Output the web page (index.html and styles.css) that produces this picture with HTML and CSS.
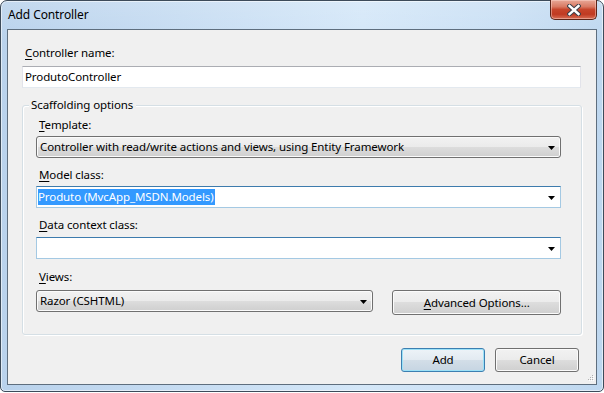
FILE: index.html
```html
<!DOCTYPE html>
<html>
<head>
<meta charset="utf-8">
<link rel="stylesheet" href="styles.css">
</head>
<body>
<div class="window">
  <div class="titlebar">
    <span class="title">Add Controller</span>
    <button class="close" aria-label="Close">
      <svg width="14" height="12" viewBox="0 0 14 12"><path d="M2.5 2 L11.5 10 M11.5 2 L2.5 10" stroke="#3b3f48" stroke-width="4.4" stroke-linecap="square"/><path d="M2.5 2 L11.5 10 M11.5 2 L2.5 10" stroke="#ffffff" stroke-width="2.4" stroke-linecap="square"/></svg>
    </button>
  </div>
  <div class="client">
    <div class="label first"><u>C</u>ontroller name:</div>
    <div class="textbox">ProdutoController</div>
    <div class="group">
      <div class="group-title">Scaffolding options</div>
      <div class="label"><u>T</u>emplate:</div>
      <div class="combo button-combo"><span class="combo-text">Controller with read/write actions and views, using Entity Framework</span><svg class="arrow" width="7" height="4" viewBox="0 0 7 4"><polygon points="0,0 7,0 3.5,4" fill="#000"/></svg></div>
      <div class="label gap"><u>M</u>odel class:</div>
      <div class="combo edit-combo"><span class="combo-text"><span class="selected">Produto (MvcApp_MSDN.Models)</span></span><svg class="arrow" width="7" height="4" viewBox="0 0 7 4"><polygon points="0,0 7,0 3.5,4" fill="#000"/></svg></div>
      <div class="label gap"><u>D</u>ata context class:</div>
      <div class="combo edit-combo data"><span class="combo-text"></span><svg class="arrow" width="7" height="4" viewBox="0 0 7 4"><polygon points="0,0 7,0 3.5,4" fill="#000"/></svg></div>
      <div class="label gap views-label"><u>V</u>iews:</div>
      <div class="views-row">
        <div class="combo button-combo views"><span class="combo-text">Razor (CSHTML)</span><svg class="arrow" width="7" height="4" viewBox="0 0 7 4"><polygon points="0,0 7,0 3.5,4" fill="#000"/></svg></div>
        <button class="btn advanced"><u>A</u>dvanced Options...</button>
      </div>
    </div>
    <div class="actions">
      <button class="btn default">Add</button>
      <button class="btn">Cancel</button>
    </div>
    <svg class="grip" width="7" height="7" viewBox="0 0 7 7">
      <rect x="5" y="0" width="1" height="1" fill="#b0b0b0"/>
      <rect x="3" y="2" width="1" height="1" fill="#b0b0b0"/>
      <rect x="5" y="2" width="1" height="1" fill="#b0b0b0"/>
      <rect x="1" y="4" width="1" height="1" fill="#b0b0b0"/>
      <rect x="3" y="4" width="1" height="1" fill="#b0b0b0"/>
      <rect x="5" y="4" width="1" height="1" fill="#b0b0b0"/>
      <rect x="6" y="1" width="1" height="1" fill="#fff"/>
      <rect x="4" y="3" width="1" height="1" fill="#fff"/>
      <rect x="6" y="3" width="1" height="1" fill="#fff"/>
      <rect x="2" y="5" width="1" height="1" fill="#fff"/>
      <rect x="4" y="5" width="1" height="1" fill="#fff"/>
      <rect x="6" y="5" width="1" height="1" fill="#fff"/>
    </svg>
  </div>
</div>
</body>
</html>
```
FILE: styles.css
```css
html, body {
  margin: 0;
  padding: 0;
  background: #ffffff;
}
body {
  font-family: "Noto Sans", "Open Sans", sans-serif;
  font-size: 11.5px;
  letter-spacing: -0.1px;
  color: #000;
}
.window {
  box-sizing: border-box;
  width: 604px;
  height: 392px;
  border: 1px solid #3d4b5a;
  border-radius: 7px 7px 5px 5px;
  background:
    linear-gradient(to bottom, rgba(255,255,255,0.15), rgba(255,255,255,0) 40px),
    linear-gradient(to right, #b9d2ec 0%, #c6dcf2 30%, #d4e7f8 60%, #c9dff4 85%, #bed7ef 100%);
  box-shadow: inset 0 0 0 1px rgba(255,255,255,0.55);
  padding: 0 6px 6px 6px;
  display: flex;
  flex-direction: column;
}
.titlebar {
  height: 28px;
  display: flex;
  justify-content: space-between;
  align-items: flex-start;
}
.title {
  margin-left: 1px;
  margin-top: 6px;
  line-height: 16px;
  font-size: 12px;
  color: #000;
}
.close {
  box-sizing: border-box;
  margin-top: -1px;
  width: 47px;
  height: 20px;
  padding: 0;
  border: 1px solid #5b2418;
  border-top: none;
  border-radius: 0 0 5px 5px;
  background: linear-gradient(to bottom, #e8a897 0%, #d97a63 35%, #c7452b 50%, #c03a22 75%, #d86e55 100%);
  box-shadow: inset 0 0 0 1px rgba(255,220,210,0.45);
  display: flex;
  align-items: center;
  justify-content: center;
}
.close svg { display: block; }
.client {
  position: relative;
  flex: 1;
  border: 1px solid #5e6e7e;
  background: #f0f0f0;
  padding: 0 15px 0 14px;
  display: flex;
  flex-direction: column;
}
.label {
  line-height: 16px;
  height: 16px;
  padding-left: 3px;
  white-space: nowrap;
}
.label.first { margin-top: 15px; }
.label u, .btn u { text-decoration: underline; text-underline-offset: 2px; }
.textbox {
  box-sizing: border-box;
  margin-top: 5px;
  height: 22px;
  background: #fff;
  border: 1px solid #e2e3ea;
  border-top-color: #abadb3;
  border-bottom-color: #e3e9ef;
  padding: 0 2px;
  line-height: 20px;
}
.group {
  position: relative;
  box-sizing: border-box;
  margin-top: 17px;
  margin-right: -1px;
  height: 230px;
  border: 1px solid #d5dfe5;
  border-radius: 3px;
  box-shadow: inset 1px 1px 0 #fff, 1px 1px 0 #fff;
  padding: 11px 20px 0 13px;
  display: flex;
  flex-direction: column;
}
.group-title {
  position: absolute;
  top: -9px;
  left: 6px;
  padding: 0 3px 0 2px;
  background: #f0f0f0;
  line-height: 16px;
}
.combo {
  box-sizing: border-box;
  margin-top: 3px;
  height: 22px;
  display: flex;
  align-items: center;
  justify-content: space-between;
  padding: 0 5px 0 3px;
}
.combo-text {
  white-space: nowrap;
  line-height: 16px;
}
.arrow { display: block; flex: none; margin-top: 1px; }
.button-combo {
  border: 1px solid #707070;
  border-radius: 3px;
  background: linear-gradient(to bottom, #f2f2f2 0%, #ebebeb 50%, #dddddd 50%, #cfcfcf 100%);
  box-shadow: inset 0 0 0 1px #fbfbfb;
}
.edit-combo {
  background: #fff;
  border: 1px solid #a4c9e3;
  border-top-color: #3d7bad;
  padding-left: 1px;
}
.edit-combo .selected {
  background: #3399ff;
  color: #fff;
  display: inline-block;
  line-height: 16px;
  padding-right: 1px;
}
.edit-combo.data { margin-top: 4px; }
.label.gap { margin-top: 9px; }
.label.views-label { margin-top: 10px; }
.views-row {
  margin-top: 5px;
  display: flex;
  align-items: flex-start;
  gap: 19px;
}
.combo.views {
  margin-top: 0;
  width: 338px;
}
.btn {
  box-sizing: border-box;
  font-family: inherit;
  font-size: 11.5px;
  letter-spacing: -0.1px;
  color: #000;
  height: 24px;
  padding: 0;
  border: 1px solid #707070;
  border-radius: 3px;
  background: linear-gradient(to bottom, #f2f2f2 0%, #ebebeb 50%, #dddddd 50%, #cfcfcf 100%);
  box-shadow: inset 0 0 0 1px #fbfbfb;
  line-height: 20px;
}
.btn.advanced {
  width: 169px;
  height: 25px;
}
.actions {
  margin-top: 13px;
  margin-right: 2px;
  display: flex;
  justify-content: flex-end;
  gap: 10px;
}
.actions .btn { width: 84px; }
.btn.default {
  border-color: #3c7fb1;
  background: linear-gradient(to bottom, #edf3f8 0%, #e2eaf1 50%, #d3dee8 50%, #c6d5e2 100%);
  box-shadow: inset 0 0 0 1px #9ce1f7;
}
.grip {
  position: absolute;
  right: 2px;
  bottom: 2px;
}
```
